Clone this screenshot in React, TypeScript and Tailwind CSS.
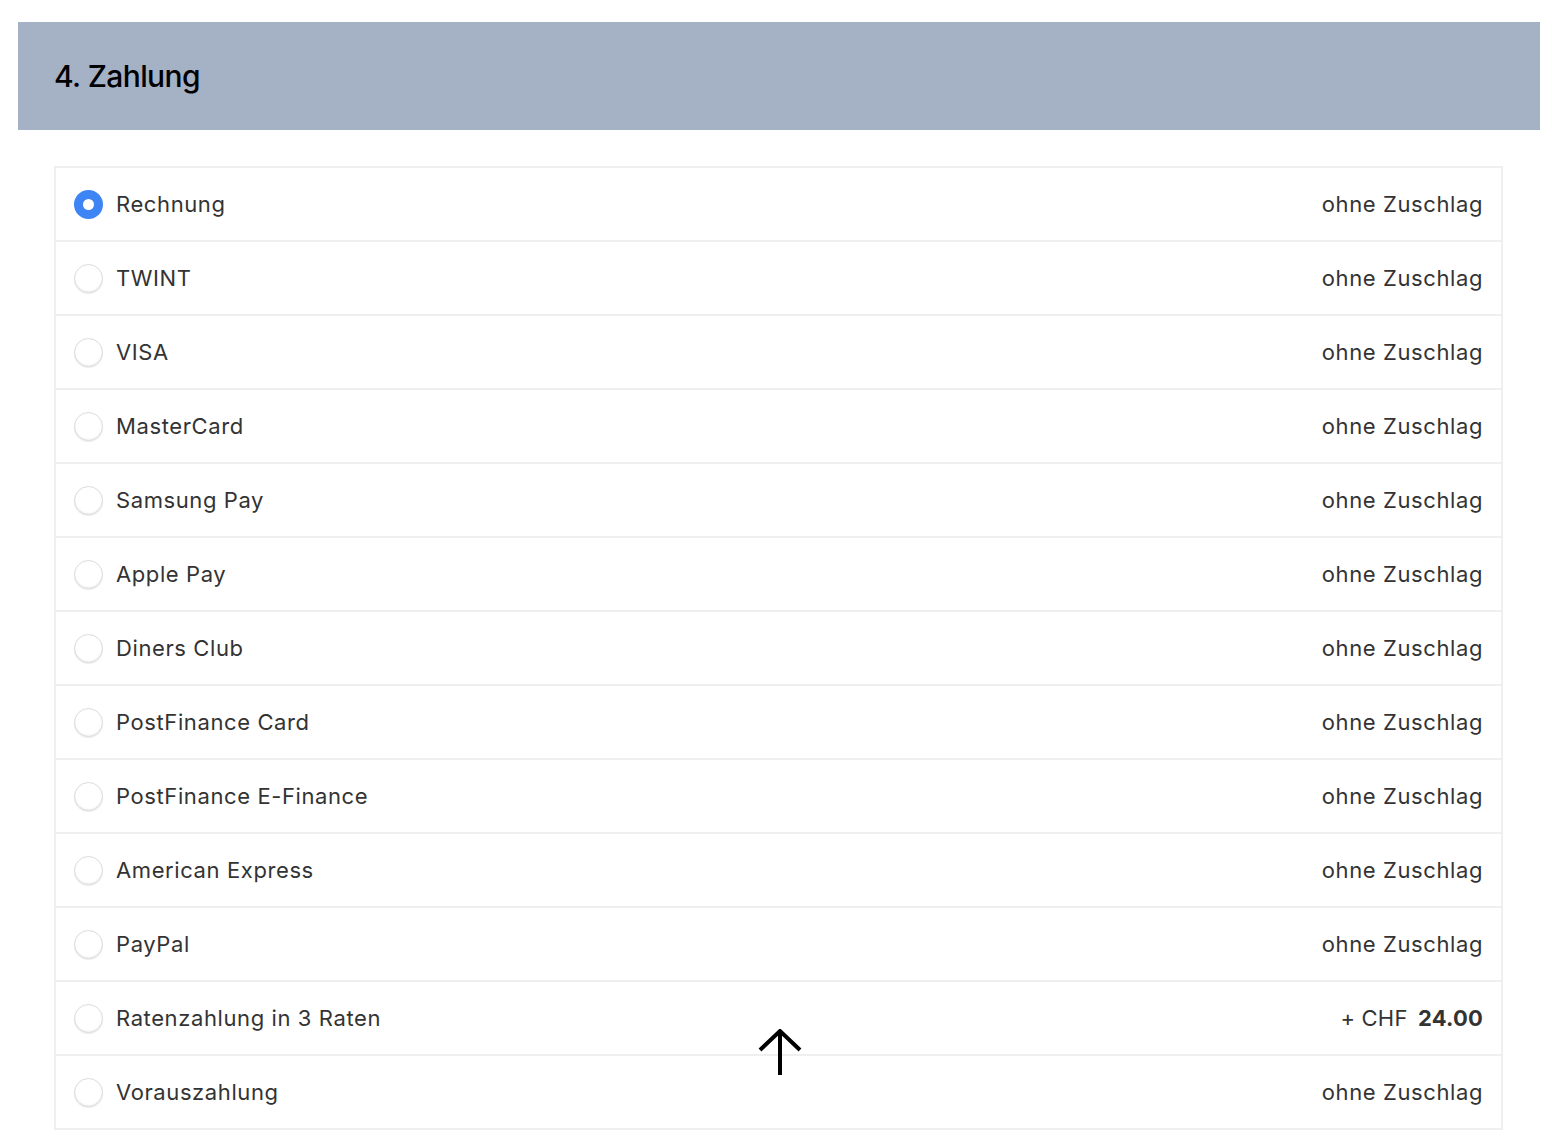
import React, { useState } from "react";

type Option = {
  id: string;
  label: string;
  surcharge?: string;
};

const options: Option[] = [
  { id: "invoice", label: "Rechnung" },
  { id: "twint", label: "TWINT" },
  { id: "visa", label: "VISA" },
  { id: "mastercard", label: "MasterCard" },
  { id: "samsung", label: "Samsung Pay" },
  { id: "apple", label: "Apple Pay" },
  { id: "diners", label: "Diners Club" },
  { id: "pfcard", label: "PostFinance Card" },
  { id: "pfefinance", label: "PostFinance E-Finance" },
  { id: "amex", label: "American Express" },
  { id: "paypal", label: "PayPal" },
  { id: "installments", label: "Ratenzahlung in 3 Raten", surcharge: "24.00" },
  { id: "prepay", label: "Vorauszahlung" },
];

function Radio({ checked }: { checked: boolean }) {
  if (checked) {
    return (
      <span className="w-[29px] h-[29px] rounded-full bg-[#3d85f5] flex items-center justify-center shrink-0">
        <span className="w-[11px] h-[11px] rounded-full bg-white" />
      </span>
    );
  }
  return (
    <span className="w-[29px] h-[29px] rounded-full bg-white border border-[#dcdcdc] shadow-[inset_0_-1px_2px_rgba(0,0,0,0.06),0_1px_1px_rgba(0,0,0,0.08)] shrink-0" />
  );
}

export default function App() {
  const [selected, setSelected] = useState("invoice");

  return (
    <div className="min-h-screen bg-white pt-[22px] pl-[18px] pr-[12px] font-['Inter','Noto_Sans',sans-serif] text-[#333]">
      <header className="h-[108px] bg-[#a5b1c5] flex items-center pl-[36px]">
        <h2 className="text-[30px] font-medium text-black tracking-[-0.6px]">4. Zahlung</h2>
      </header>

      <div className="mt-[36px] ml-[36px] mr-[37px] border-2 border-[#efefef]">
        {options.map((opt, i) => (
          <label
            key={opt.id}
            onClick={() => setSelected(opt.id)}
            className={`flex items-center pl-[18px] pr-[18px] cursor-pointer ${
              i > 0 ? "h-[74px] border-t-2 border-[#efefef]" : "h-[72px]"
            }`}
          >
            <Radio checked={selected === opt.id} />
            <span className="ml-[13px] text-[22px] tracking-[0.6px]">{opt.label}</span>
            {opt.surcharge ? (
              <span className="ml-auto text-[22px] tracking-[0.2px]">
                + CHF <b className="ml-[4px] font-bold">{opt.surcharge}</b>
              </span>
            ) : (
              <span className="ml-auto text-[22px] tracking-[0.6px]">ohne Zuschlag</span>
            )}
          </label>
        ))}
      </div>

      {/* scroll-to-top button */}
      <button className="fixed left-[758px] top-[1029px] w-[44px] h-[46px] flex items-center justify-center">
        <svg width="44" height="46" viewBox="0 0 44 46" fill="none" stroke="black" strokeWidth="4">
          <path d="M22 3v43" />
          <path d="M2 21L22 2l20 19" />
        </svg>
      </button>
    </div>
  );
}
